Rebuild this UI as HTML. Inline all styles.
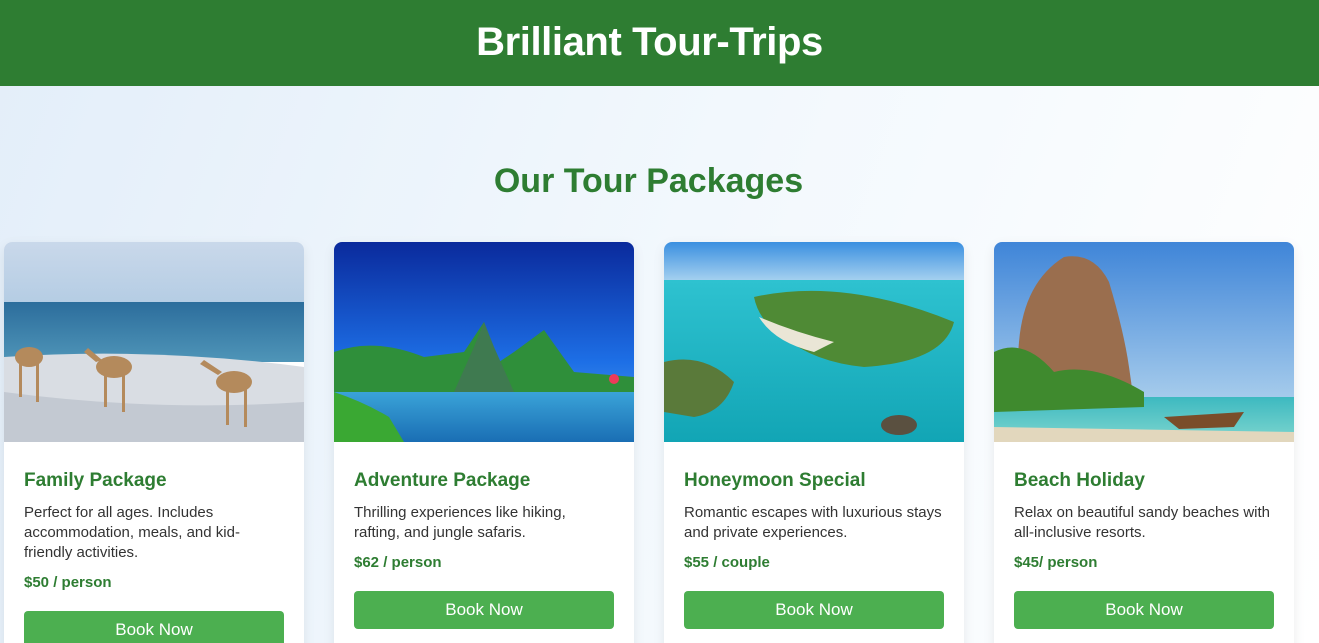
<!DOCTYPE html>
<html><head><meta charset="utf-8"><style>
*{box-sizing:border-box;margin:0;padding:0}
html,body{width:1319px;height:643px;overflow:hidden}
body{font-family:"Liberation Sans",sans-serif;background:linear-gradient(110deg,#e3eef9 0%,#f2f8fd 50%,#ffffff 100%);position:relative}
header{height:86px;background:#2e7d32;color:#fff;text-align:center}
header h1{font-size:40px;line-height:84px;font-weight:bold;letter-spacing:-0.4px;padding-right:20px}
h2{position:absolute;top:160px;left:0;width:1297px;text-align:center;color:#2e7d32;font-size:34px;line-height:42px}
.card{position:absolute;top:242px;width:300px;height:420px;background:#fff;border-radius:8px;overflow:hidden;box-shadow:0 4px 12px rgba(0,0,0,0.08)}
.img{height:200px;position:relative;overflow:hidden}
.img svg{position:absolute;left:0;top:0}
.body{padding:27px 20px 0}
h3{color:#2e7d32;font-size:19px;line-height:24px;margin-bottom:10px}
p{color:#333;font-size:15px;line-height:20px}
.price{color:#2e7d32;font-weight:bold;font-size:15px;line-height:20px;margin-top:10px}
.btn{margin-top:18px;height:38px;background:#4caf50;color:#fff;border-radius:4px;text-align:center;font-size:17px;line-height:38px}
</style></head><body>
<header><h1>Brilliant Tour-Trips</h1></header>
<h2>Our Tour Packages</h2>

<div class="card" style="left:4px">
<div class="img"><svg width="300" height="200">
<defs><linearGradient id="s1" x1="0" y1="0" x2="0" y2="1"><stop offset="0" stop-color="#c9d8ea"/><stop offset="1" stop-color="#b5cde4"/></linearGradient>
<linearGradient id="w1" x1="0" y1="0" x2="0" y2="1"><stop offset="0" stop-color="#2c6d9c"/><stop offset="1" stop-color="#4f95b8"/></linearGradient></defs>
<rect width="300" height="60" fill="url(#s1)"/>
<rect y="60" width="300" height="60" fill="url(#w1)"/>
<path d="M0 115 Q150 105 300 125 L300 200 L0 200Z" fill="#d9dde3"/>
<path d="M0 150 Q150 170 300 160 L300 200 L0 200Z" fill="#c3c9d2"/>
<g fill="#b48a5c"><ellipse cx="25" cy="115" rx="14" ry="10"/><ellipse cx="110" cy="125" rx="18" ry="11"/><ellipse cx="230" cy="140" rx="18" ry="11"/>
<rect x="100" y="130" width="3" height="35"/><rect x="118" y="130" width="3" height="40"/><rect x="222" y="145" width="3" height="38"/><rect x="240" y="145" width="3" height="40"/><rect x="15" y="120" width="3" height="35"/><rect x="32" y="120" width="3" height="40"/>
<path d="M92 120 L80 110 L84 106 L98 118Z"/><path d="M214 133 L196 122 L200 118 L218 130Z"/></g>
</svg></div>
<div class="body"><h3>Family Package</h3><p>Perfect for all ages. Includes accommodation, meals, and kid-friendly activities.</p><div class="price">$50 / person</div><div class="btn">Book Now</div></div></div>

<div class="card" style="left:334px">
<div class="img"><svg width="300" height="200">
<defs><linearGradient id="s2" x1="0" y1="0" x2="0" y2="1"><stop offset="0" stop-color="#0a2a9c"/><stop offset="0.6" stop-color="#1d6fe6"/><stop offset="1" stop-color="#5aa6ee"/></linearGradient>
<linearGradient id="w2" x1="0" y1="0" x2="0" y2="1"><stop offset="0" stop-color="#3aa3d8"/><stop offset="1" stop-color="#1a6eb4"/></linearGradient></defs>
<rect width="300" height="200" fill="url(#s2)"/>
<path d="M0 110 Q40 95 90 115 L130 110 L150 80 L165 120 L180 110 L210 88 L240 130 L300 135 L300 160 L0 160Z" fill="#2f8f3a"/>
<path d="M140 105 L150 80 L160 105 L180 150 L120 150Z" fill="#3f7a50"/>
<rect y="150" width="300" height="50" fill="url(#w2)"/>
<path d="M0 150 Q30 160 55 175 L70 200 L0 200Z" fill="#3aa833"/>
<circle cx="280" cy="137" r="5" fill="#ee3a5a"/>
</svg></div>
<div class="body"><h3>Adventure Package</h3><p>Thrilling experiences like hiking, rafting, and jungle safaris.</p><div class="price">$62 / person</div><div class="btn">Book Now</div></div></div>

<div class="card" style="left:664px">
<div class="img"><svg width="300" height="200">
<defs><linearGradient id="s3" x1="0" y1="0" x2="0" y2="1"><stop offset="0" stop-color="#3a8fe0"/><stop offset="1" stop-color="#a9d3f0"/></linearGradient>
<linearGradient id="w3" x1="0" y1="0" x2="0" y2="1"><stop offset="0" stop-color="#2ec2d0"/><stop offset="1" stop-color="#12a5b5"/></linearGradient></defs>
<rect width="300" height="40" fill="url(#s3)"/>
<rect y="38" width="300" height="162" fill="url(#w3)"/>
<path d="M90 55 Q180 35 290 80 Q280 120 200 125 Q150 120 120 95 Q95 80 90 55Z" fill="#4f8a35"/>
<path d="M95 75 Q130 90 170 100 L150 110 Q110 100 95 75Z" fill="#eae6d6"/>
<path d="M0 120 Q40 110 70 140 Q60 170 30 175 L0 170Z" fill="#5a7a3a"/>
<ellipse cx="235" cy="183" rx="18" ry="10" fill="#5a5040"/>
</svg></div>
<div class="body"><h3>Honeymoon Special</h3><p>Romantic escapes with luxurious stays and private experiences.</p><div class="price">$55 / couple</div><div class="btn">Book Now</div></div></div>

<div class="card" style="left:994px">
<div class="img"><svg width="300" height="200">
<defs><linearGradient id="s4" x1="0" y1="0" x2="0" y2="1"><stop offset="0" stop-color="#3f85d8"/><stop offset="1" stop-color="#a8cdec"/></linearGradient>
<linearGradient id="w4" x1="0" y1="0" x2="0" y2="1"><stop offset="0" stop-color="#3db9c0"/><stop offset="1" stop-color="#7fd6cf"/></linearGradient></defs>
<rect width="300" height="160" fill="url(#s4)"/>
<rect y="155" width="300" height="45" fill="url(#w4)"/>
<path d="M0 185 L300 190 L300 200 L0 200Z" fill="#e2d7bd"/>
<path d="M25 100 Q30 40 70 15 Q100 10 115 40 Q130 90 135 125 L140 160 L20 160Z" fill="#9a6e4e"/>
<path d="M0 110 Q30 95 60 130 Q100 120 150 150 L150 165 L0 170Z" fill="#3f8a2e"/>
<path d="M170 175 L250 170 L240 185 L185 187Z" fill="#7a4d2a"/>
</svg></div>
<div class="body"><h3>Beach Holiday</h3><p>Relax on beautiful sandy beaches with all-inclusive resorts.</p><div class="price">$45/ person</div><div class="btn">Book Now</div></div></div>
</body></html>
